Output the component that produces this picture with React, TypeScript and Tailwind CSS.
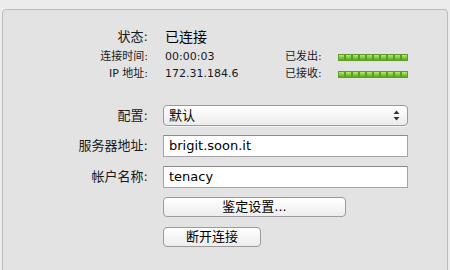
import type { ReactNode } from 'react';

const font = { fontFamily: '"DejaVu Sans", "Noto Sans CJK SC", sans-serif' };

function Meter() {
  return (
    <div className="flex">
      {Array.from({ length: 10 }).map((_, i) => (
        <div
          key={i}
          className="w-[7px] h-[7px] border border-[#5f9a2c] bg-gradient-to-b from-[#b6ef6a] via-[#7fcd37] to-[#5aa824]"
        />
      ))}
    </div>
  );
}

function FormRow({ label, children }: { label: string; children: ReactNode }) {
  return (
    <div className="flex items-center">
      <div className="w-[145px] text-right text-[13px] text-[#1a1a1a]">{label}</div>
      <div className="ml-[15px]">{children}</div>
    </div>
  );
}

export default function App() {
  return (
    <div className="w-[450px] h-[270px] bg-[#ececec] pt-[9px] px-[2px] overflow-hidden" style={font}>
      <div className="h-[300px] bg-[#e3e3e3] border border-[#bcbcbc] rounded-t-[4px]">
        <div className="pt-[18px]">
          <div className="flex items-center h-[18px]">
            <div className="w-[145px] text-right text-[13px] text-[#1a1a1a]">状态:</div>
            <div className="ml-[17px] text-[14px] text-black">已连接</div>
          </div>

          <div className="flex items-center h-[17px] mt-[3px] text-[11px] text-[#1a1a1a]">
            <div className="w-[145px] text-right">连接时间:</div>
            <div className="ml-[17px] w-[120px]">00:00:03</div>
            <div className="w-[53px]">已发出:</div>
            <Meter />
          </div>

          <div className="flex items-center h-[17px] text-[11px] text-[#1a1a1a]">
            <div className="w-[145px] text-right">IP 地址:</div>
            <div className="ml-[17px] w-[120px]">172.31.184.6</div>
            <div className="w-[53px]">已接收:</div>
            <Meter />
          </div>
        </div>

        <div className="mt-[22px] flex flex-col gap-[9px]">
          <FormRow label="配置:">
            <div className="w-[245px] h-[21px] flex items-center justify-between pl-[5px] pr-[7px] rounded-[4px] border border-[#9a9a9a] bg-gradient-to-b from-white to-[#ececec] shadow-[0_1px_0_rgba(255,255,255,0.6)] text-[13px] text-black">
              <span>默认</span>
              <svg width="7" height="11" viewBox="0 0 7 11">
                <path d="M3.5 0.5 L6.5 4 L0.5 4 Z" fill="#333" />
                <path d="M3.5 10.5 L6.5 7 L0.5 7 Z" fill="#333" />
              </svg>
            </div>
          </FormRow>
          <FormRow label="服务器地址:">
            <div className="w-[245px] h-[22px] flex items-center pl-[5px] bg-white border border-[#a5a5a5] border-t-[#8c8c8c] text-[13px] text-black">
              brigit.soon.it
            </div>
          </FormRow>
          <FormRow label="帐户名称:">
            <div className="w-[245px] h-[22px] flex items-center pl-[5px] bg-white border border-[#a5a5a5] border-t-[#8c8c8c] text-[13px] text-black">
              tenacy
            </div>
          </FormRow>
        </div>

        <div className="ml-[160px] mt-[9px] flex flex-col gap-[10px]">
          <div className="w-[183px] h-[20px] flex items-center justify-center rounded-[4px] border border-[#9b9b9b] bg-gradient-to-b from-white to-[#ededed] text-[13px] text-black">
            鉴定设置...
          </div>
          <div className="w-[98px] h-[20px] flex items-center justify-center rounded-[4px] border border-[#9b9b9b] bg-gradient-to-b from-white to-[#ededed] text-[13px] text-black">
            断开连接
          </div>
        </div>
      </div>
    </div>
  );
}
